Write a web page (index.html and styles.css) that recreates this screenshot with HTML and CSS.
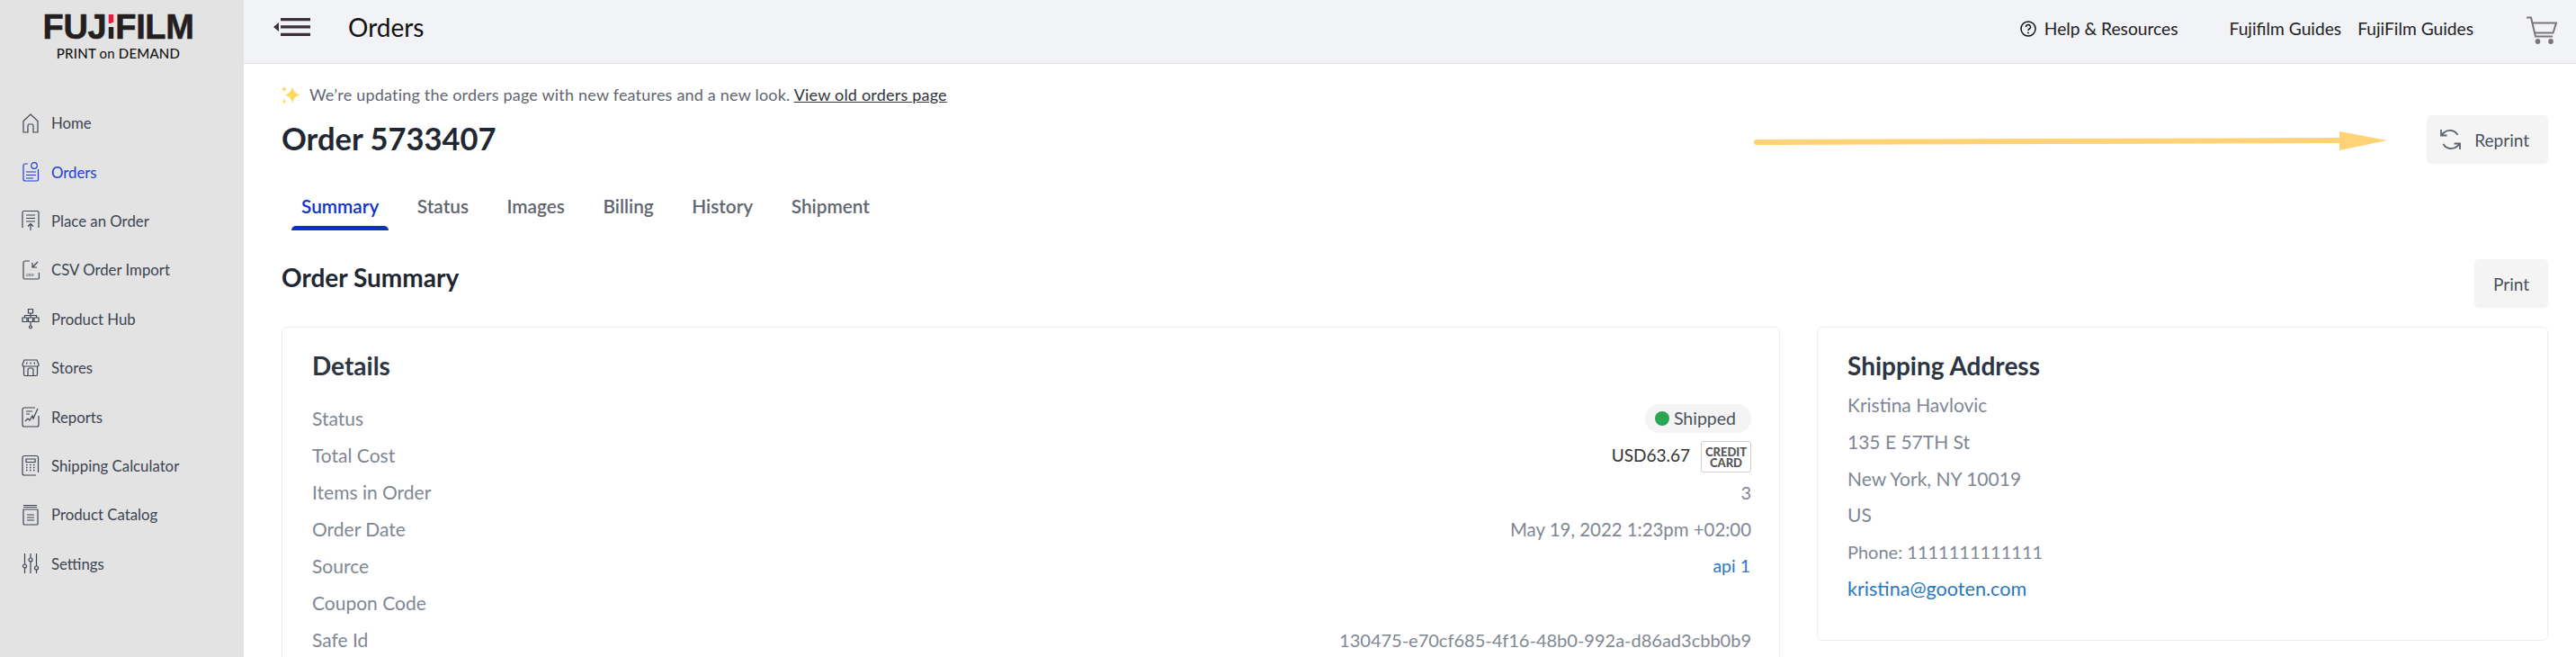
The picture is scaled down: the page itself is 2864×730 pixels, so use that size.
FILE: index.html
```html
<!DOCTYPE html>
<html lang="en">
<head>
  <meta charset="UTF-8">
  <meta name="viewport" content="width=device-width, initial-scale=1.0">
  <title>Order 5733407</title>
  <link rel="stylesheet" href="styles.css">
</head>
<body>

  <div class="app">
    <aside class="sidebar">
      <div class="logo">
        <div class="logo-mark">FUJ<span class="logo-i">I</span>FILM</div>
        <div class="logo-sub">PRINT <span class="logo-on">on</span> DEMAND</div>
      </div>
      <nav class="nav">
        <a class="nav-item">
          <svg class="nav-icon" viewBox="0 0 20 24"><path d="M2 22V9.5L10 2l8 7.500V22h-5v-7.500a1.500 1.500 0 0 0-1.500-1.500h-3A1.500 1.500 0 0 0 7 14.500V22z"/></svg>
          Home
        </a>
        <a class="nav-item active">
          <svg class="nav-icon" viewBox="0 0 20 24"><path d="M7 3H4a2 2 0 0 0-2 2v15a2 2 0 0 0 2 2h13a1.500 1.500 0 0 0 1.500-1.500V9"/><circle cx="14" cy="5" r="3.300"/><path d="M5 12h11M5 15.500h11M5 19h8"/></svg>
          Orders
        </a>
        <a class="nav-item">
          <svg class="nav-icon" viewBox="0 0 20 24"><path d="M1 20V3a1.500 1.500 0 0 1 1.500-1.500h15A1.500 1.500 0 0 1 19 3v17"/><path d="M5 6h10M5 9.500h10M5 13h10M10 23v-7M7 18.500l3-3 3 3"/></svg>
          Place an Order
        </a>
        <a class="nav-item">
          <svg class="nav-icon" viewBox="0 0 20 24"><path d="M9 2H4a2 2 0 0 0-2 2v16.500a1.500 1.500 0 0 0 1.500 1.500H18a1.500 1.500 0 0 0 1.500-1.500V15"/><path d="M18 3l-6 6M12 4v5h5"/><text class="csv-text" x="5" y="19">csv</text></svg>
          CSV Order Import
        </a>
        <a class="nav-item">
          <svg class="nav-icon" viewBox="0 0 20 24"><path d="M7.500 1.500h5v4.500h-5zM1 11h5v4.500H1zM7.500 11h5v4.500h-5zM14 11h5v4.500h-5zM10 6v5M3.500 11V8.500h13V11M10 15.500V20"/><circle cx="10" cy="21.500" r="1.500"/></svg>
          Product Hub
        </a>
        <a class="nav-item">
          <svg class="nav-icon" viewBox="0 0 20 24"><path d="M3 3h14l2 5a1.500 1.500 0 0 1-1.500 2h-15A1.500 1.500 0 0 1 1 8zM2.500 10v9a1.500 1.500 0 0 0 1.500 1.500h12a1.500 1.500 0 0 0 1.500-1.500v-9"/><path d="M7 20.500V14a2 2 0 0 1 2-2h2a2 2 0 0 1 2 2v6.500M6 5.500l-.5 2M10 5.500v2M14 5.500l.5 2"/></svg>
          Stores
        </a>
        <a class="nav-item">
          <svg class="nav-icon" viewBox="0 0 20 24"><path d="M15 2H3a2 2 0 0 0-2 2v17a2 2 0 0 0 2 2h14a2 2 0 0 0 2-2V11"/><path d="M5 6h7M5 9h4M4 17l3-3 2 2 3-5 1 3 5-11"/></svg>
          Reports
        </a>
        <a class="nav-item">
          <svg class="nav-icon" viewBox="0 0 20 24"><path d="M18.500 20V3.500a2 2 0 0 0-2-2H3a2 2 0 0 0-2 2V21a2 2 0 0 0 2 2h13"/><path d="M5 5h10v3.500H5z"/><path class="thin" d="M5 11.500h2M9 11.500h2M13 11.500h2M5 14.500h2M9 14.500h2M13 14.500h2M5 17.500h2M9 17.500h2M13 17.500h2"/></svg>
          Shipping Calculator
        </a>
        <a class="nav-item">
          <svg class="nav-icon" viewBox="0 0 20 24"><path d="M2 1.500h15M2 3.500h15M2 6h15.500a.5.5 0 0 1 .5.500V22a1 1 0 0 1-1 1H3a1 1 0 0 1-1-1z"/><path d="M6 12h8M6 15h8M6 18h8"/></svg>
          Product Catalog
        </a>
        <a class="nav-item">
          <svg class="nav-icon" viewBox="0 0 20 24"><path d="M3.500 1v12M3.500 17v6M10 1v5M10 10v13M16.500 1v14M16.500 19v4"/><circle cx="3.500" cy="15" r="2"/><circle cx="10" cy="8" r="2"/><circle cx="16.500" cy="17" r="2"/></svg>
          Settings
        </a>
      </nav>
    </aside>

    <div class="main">
      <header class="topbar">
        <svg class="menu-icon" viewBox="0 0 41 20"><path d="M0 10l6-5v10z"/><path d="M8 0h33v3.300H8zM8 8.300h33v3.300H8zM8 16.700h33V20H8z"/></svg>
        <div class="topbar-title">Orders</div>
        <div class="topbar-links">
          <a class="help-link">
            <svg class="help-icon" viewBox="0 0 18 18"><circle cx="9" cy="9" r="8"/><path d="M6.500 7a2.500 2.500 0 1 1 3.600 2.200c-.8.400-1.100.9-1.100 1.800"/><circle class="dot" cx="9" cy="13.500" r=".9"/></svg>
            Help &amp; Resources
          </a>
          <a class="guide-link first">Fujifilm Guides</a>
          <a class="guide-link">FujiFilm Guides</a>
          <svg class="cart-icon" viewBox="0 0 35 31"><path d="M1 1.500h5l5 21h19"/><path d="M7.500 7.500H34l-3.500 11H10"/><ellipse cx="13.500" cy="28" rx="2.800" ry="3"/><ellipse cx="28" cy="28" rx="2.800" ry="3"/></svg>
        </div>
      </header>

      <main class="content">
        <div class="notice">
          <svg class="sparkle" viewBox="0 0 21 21"><path d="M12 1c1 5.500 3 8 9 9.500-6 1.500-8 4-9 9.500-1-5.500-3-8-8.500-9.500C9 9 11 6.500 12 1z"/><path d="M3 0l.9 3L6 4 3.900 5 3 8 2.100 5 0 4l2.100-1zM3 14l.7 2.500L5 17.500l-1.300 1L3 21l-.7-2.500-1.300-1 1.300-1z"/></svg>
          <span>We’re updating the orders page with new features and a new look. <a class="notice-link">View old orders page</a></span>
        </div>

        <div class="title-row">
          <h1>Order 5733407</h1>
          <button class="btn">
            <svg class="reprint-icon" viewBox="0 0 25 26"><path d="M20.500 8A10 10 0 0 0 5 5.500L2 8.500M2 2v6.500h6.500"/><path d="M4.500 18A10 10 0 0 0 20 20.500l3-3M23 24v-6.500h-6.500"/></svg>
            Reprint
          </button>
        </div>

        <div class="tabs">
          <a class="tab active">Summary</a>
          <a class="tab">Status</a>
          <a class="tab">Images</a>
          <a class="tab">Billing</a>
          <a class="tab">History</a>
          <a class="tab">Shipment</a>
        </div>

        <div class="section-row">
          <h2>Order Summary</h2>
          <button class="btn">Print</button>
        </div>

        <div class="cards">
          <section class="card">
            <h3>Details</h3>
            <div class="row"><span class="label">Status</span><span class="pill"><i class="pill-dot"></i>Shipped</span></div>
            <div class="row"><span class="label">Total Cost</span><span class="cost"><span class="cost-value">USD63.67</span><span class="pay-badge">CREDIT<br>CARD</span></span></div>
            <div class="row"><span class="label">Items in Order</span><span>3</span></div>
            <div class="row"><span class="label">Order Date</span><span class="date">May 19, 2022 1:23pm +02:00</span></div>
            <div class="row"><span class="label">Source</span><a class="text-link api-link">api 1</a></div>
            <div class="row"><span class="label">Coupon Code</span></div>
            <div class="row"><span class="label">Safe Id</span><span>130475-e70cf685-4f16-48b0-992a-d86ad3cbb0b9</span></div>
          </section>

          <section class="card address">
            <h3>Shipping Address</h3>
            <div class="line">Kristina Havlovic</div>
            <div class="line">135 E 57TH St</div>
            <div class="line">New York, NY 10019</div>
            <div class="line">US</div>
            <div class="line phone">Phone: 1111111111111</div>
            <div class="line email"><a class="text-link">kristina@gooten.com</a></div>
          </section>
        </div>

        <svg class="arrow" viewBox="0 0 704 24"><path class="arrow-tail" d="M3 14L652 12"/><path class="arrow-head" d="M651 2l53 10-53 11z"/></svg>
      </main>
    </div>
  </div>

</body>
</html>
```

FILE: styles.css
```css
/* Global styles */
* {
  margin: 0;
  padding: 0;
  box-sizing: border-box;
}

html,
body {
  height: 100%;
  overflow: hidden;
}

body {
  font-family: 'Lato', 'Open Sans', sans-serif;
  background: #fff;
  color: #7f8794;
}

.app {
  display: flex;
  height: 100vh;
}

/* Sidebar */
.sidebar {
  width: 271px;
  flex-shrink: 0;
  background-color: #e3e3e3;
}

.logo {
  height: 109.5px;
  padding: 12px 8px 0 0;
  text-align: center;
  color: #231f20;
}

.logo-mark {
  font-family: 'Liberation Sans', sans-serif;
  font-weight: 700;
  font-size: 38px;
  line-height: 36px;
  letter-spacing: -0.4px;
  -webkit-text-stroke: 0.6px #231f20;
}

.logo-i {
  background: linear-gradient(172deg, #ee1c3c 0, #ee1c3c 40%, transparent 40%, transparent 50%, #231f20 50%);
  -webkit-background-clip: text;
  background-clip: text;
  color: transparent;
  -webkit-text-stroke: 0;
}

.logo-sub {
  font-size: 15px;
  font-weight: 500;
  line-height: 18px;
  letter-spacing: 0.2px;
  margin-top: 2px;
  color: #111;
}

.logo-on {
  font-weight: 400;
}

.nav-item {
  display: flex;
  align-items: center;
  gap: 13px;
  height: 54.4px;
  padding-left: 24px;
  font-size: 16.8px;
  color: #3d4451;
}

.nav-item.active {
  color: #1c3fd1;
}

.nav-icon {
  width: 20px;
  height: 24px;
  flex-shrink: 0;
  fill: none;
  stroke: currentColor;
  stroke-width: 1.2;
}

.nav-icon .thin {
  stroke-width: 1.6;
  stroke-dasharray: 1 .5;
}

.csv-text {
  font-size: 6px;
  fill: currentColor;
  stroke: none;
}

/* Top bar */
.main {
  flex: 1;
  min-width: 0;
}

.topbar {
  display: flex;
  align-items: center;
  height: 71px;
  padding: 0 21px 10px 33px;
  background-color: #f1f3f7;
  border-bottom: 1px solid #e1e1e3;
}

.menu-icon {
  width: 41px;
  height: 20px;
  fill: #3d2f3a;
  margin-right: 42px;
}

.topbar-title {
  font-size: 28px;
  color: #111;
}

.topbar-links {
  display: flex;
  align-items: center;
  margin-left: auto;
  margin-top: 3px;
  font-size: 19.2px;
  color: #222;
}

.help-link {
  display: flex;
  align-items: center;
  gap: 9px;
  margin-right: 57px;
}

.help-icon {
  width: 18px;
  height: 18px;
  fill: none;
  stroke: #111;
  stroke-width: 1.5;
}

.help-icon .dot {
  fill: #111;
  stroke: none;
}

.guide-link.first {
  margin-right: 18px;
}

.cart-icon {
  width: 35px;
  height: 31px;
  margin: 4px 0 0 58px;
  fill: none;
  stroke: #7d747b;
  stroke-width: 2;
}

.cart-icon ellipse {
  fill: #7d747b;
  stroke: none;
}

/* Page content */
.content {
  position: relative;
  padding: 22px 31px 0 42px;
}

.notice {
  display: flex;
  align-items: center;
  height: 24px;
  font-size: 18px;
  letter-spacing: 0.2px;
  color: #5f6570;
}

.sparkle {
  width: 21px;
  height: 21px;
  margin-right: 10px;
  fill: #ffd75e;
}

.notice-link {
  color: #30343c;
  text-decoration: underline;
}

.title-row,
.section-row {
  display: flex;
  justify-content: space-between;
}

.title-row {
  align-items: center;
  margin-top: 11px;
}

h1 {
  font-size: 34.5px;
  font-weight: 700;
  color: #1f2733;
  margin-top: -4px;
}

.btn {
  display: flex;
  align-items: center;
  gap: 14px;
  height: 54px;
  padding: 0 21px 0 14px;
  border: none;
  border-radius: 5px;
  background-color: #f4f4f5;
  font-family: inherit;
  font-size: 19px;
  color: #4b515c;
}

.section-row .btn {
  padding: 0 21px;
}

.reprint-icon {
  width: 25px;
  height: 26px;
  fill: none;
  stroke: #5f6570;
  stroke-width: 1.8;
}

/* Tabs */
.tabs {
  display: flex;
  align-items: flex-start;
  gap: 20.500px;
  margin: 35px 0 0 11px;
  height: 39px;
}

.tab {
  padding: 0 11px;
  font-size: 20.8px;
  font-weight: 600;
  line-height: 24px;
  color: #5f6670;
}

.tab.active {
  color: #0f33c9;
}

.tab.active::after {
  content: "";
  display: block;
  height: 5px;
  margin: 10px -11px 0;
  border-radius: 5px 5px 0 0;
  background-color: #0c30c8;
}

.section-row {
  align-items: flex-start;
  margin-top: 32px;
}

h2 {
  font-size: 28px;
  font-weight: 700;
  line-height: 40px;
  color: #1f2733;
}

/* Cards */
.cards {
  display: grid;
  grid-template-columns: 1fr 813px;
  gap: 41px;
  align-items: start;
  margin-top: 21px;
}

.card {
  padding: 27px 31px 36px 33px;
  border: 1px solid #eeeeee;
  border-radius: 6px;
  font-size: 20px;
}

h3 {
  font-size: 28px;
  font-weight: 700;
  line-height: 30px;
  color: #2b3543;
  margin-bottom: 23px;
}

.row {
  display: flex;
  align-items: center;
  justify-content: space-between;
  height: 41px;
}

.label {
  font-size: 21px;
}

.date {
  font-size: 20.4px;
}

.pill {
  display: flex;
  align-items: center;
  gap: 5px;
  height: 32px;
  padding: 0 17px 0 11px;
  border-radius: 16px;
  background-color: #f4f4f4;
  font-size: 19.5px;
  color: #4b515c;
}

.pill-dot {
  width: 16px;
  height: 16px;
  border-radius: 50%;
  background-color: #2aa552;
}

.cost {
  display: flex;
  align-items: center;
  gap: 12px;
}

.cost-value {
  font-size: 19px;
  color: #333;
}

.pay-badge {
  width: 56px;
  height: 35px;
  margin-top: 4px;
  border: 1px solid #cfcfcf;
  border-radius: 3px;
  font-size: 13px;
  font-weight: 900;
  line-height: 12px;
  padding-top: 5px;
  text-align: center;
  color: #555;
}

.text-link {
  color: #2b77c0;
}

.api-link {
  font-size: 19.5px;
  margin-right: 1px;
}

.address {
  font-size: 21px;
}

.address h3 {
  margin-bottom: 9px;
}

.address .line {
  height: 40.8px;
  line-height: 40px;
}

.address .phone {
  font-size: 20px;
}

.address .email {
  font-size: 21.6px;
}

/* Annotation arrow */
.arrow {
  position: absolute;
  left: 1679px;
  top: 73px;
  width: 704px;
  height: 24px;
}

.arrow-tail {
  fill: none;
  stroke: #ffd275;
  stroke-width: 6;
  stroke-linecap: round;
}

.arrow-head {
  fill: #ffd275;
}
```
